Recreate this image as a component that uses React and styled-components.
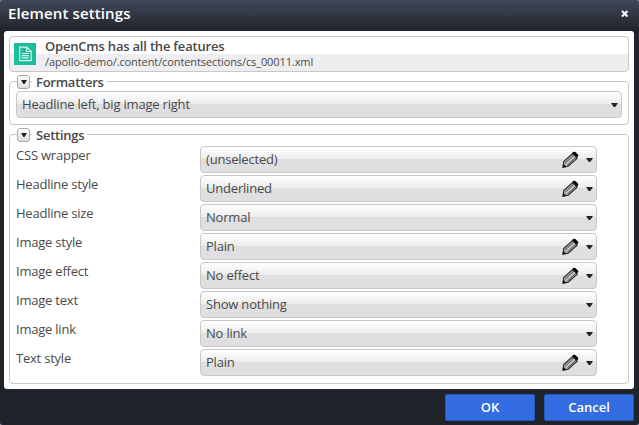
import React from 'react';
import styled, { createGlobalStyle } from 'styled-components';

const GlobalStyle = createGlobalStyle`
  * { box-sizing: border-box; }
  body {
    margin: 0;
    overflow: hidden;
    background: #8d95ad;
    font-family: "Open Sans", sans-serif;
    font-size: 13px;
    color: #4a4a4a;
  }
`;

const Dialog = styled.div`
  display: flex;
  flex-direction: column;
  width: 639px;
  height: 425px;
  padding: 0 5px 0 4px;
  border-radius: 3px;
  background: #1f242b linear-gradient(#424859, #1f242b) no-repeat top / 100% 31px;
`;

const TitleBar = styled.header`
  display: flex;
  justify-content: space-between;
  flex: none;
  height: 31px;
  padding: 0 4px;
  color: #fff;
`;

const Title = styled.h1`
  margin: 0;
  font-size: 15px;
  font-weight: 600;
  letter-spacing: 0.12px;
  line-height: 27px;
`;

const CloseButton = styled.button`
  display: flex;
  width: 10px;
  height: 27px;
  padding: 10px 1px 0;
  border: 0;
  background: none;
`;

const Content = styled.main`
  height: 358px;
  flex: none;
  padding: 5px;
  border-radius: 3px;
  background: #fff;
`;

const ResourceInfo = styled.div`
  display: flex;
  height: 36px;
  padding: 6px 4px;
  gap: 9px;
  border: 1px solid #c8c8c8;
  border-radius: 4px;
  background: linear-gradient(#fff 17px, #eeeef0 17px);
`;

const ResourceText = styled.div`
  margin-top: -6px;
`;

const ResourceTitle = styled.div`
  height: 18px;
  color: #484848;
  font-size: 13px;
  font-weight: 600;
  letter-spacing: -0.2px;
  line-height: 19px;
`;

const ResourcePath = styled.div`
  font-size: 11px;
  letter-spacing: -0.1px;
  line-height: 14px;
`;

const Group = styled.section`
  height: ${(p) => p.$height}px;
  margin-top: 9px;
  padding: 0 6px;
  border: 1px solid #c8c8c8;
  border-radius: 4px;
`;

const GroupHeader = styled.div`
  display: flex;
  width: max-content;
  height: 14px;
  margin: -7px 0 2px 1px;
`;

const Toggle = styled.button`
  display: flex;
  align-items: center;
  justify-content: center;
  width: 13px;
  height: 14px;
  padding: 0;
  border: 1px solid #aaa;
  border-radius: 3px;
  background: linear-gradient(#fff, #ddd);
`;

const GroupTitle = styled.h2`
  margin: 0 0 0 2px;
  padding: 0 3px 0 4px;
  background: #fff;
  color: #484848;
  font-size: 13px;
  font-weight: 600;
  letter-spacing: -0.25px;
  line-height: 15px;
`;

const Row = styled.div`
  display: grid;
  grid-template-columns: 184px 397px;
  height: 29px;
`;

const Label = styled.label`
  letter-spacing: -0.22px;
  line-height: 18px;
`;

const Select = styled.div`
  display: flex;
  align-items: center;
  height: 27px;
  padding: 0 3px 0 5px;
  border: 1px solid #c8c8c8;
  border-radius: 4px;
  background: linear-gradient(#fff 0, #ececec 12px, #dfdfe1 12px);
`;

const Value = styled.span`
  flex: 1;
  letter-spacing: -0.2px;
  line-height: 25px;
`;

const FormatterSlot = styled.div`
  margin-top: 1px;
`;

const SettingsList = styled.div`
  padding-top: 2px;
`;

const PencilSvg = styled.svg`
  margin-right: 7px;
`;

const Footer = styled.footer`
  display: flex;
  justify-content: flex-end;
  gap: 9px;
  padding-top: 5px;
`;

const ActionButton = styled.button`
  width: 90px;
  height: 27px;
  padding: 0 0 1px;
  border: 1px solid #2657bd;
  border-radius: 2px;
  background: #346de2;
  color: #fff;
  font: 600 13px/24px "Open Sans", sans-serif;
`;

const Arrow = ({ width = 7 }) => (
  <svg width={width} height="4" viewBox="0 0 7 4" preserveAspectRatio="none">
    <path d="M0 0h7L4.2 4H2.8z" fill="#222" />
  </svg>
);

const Pencil = () => (
  <PencilSvg width="17" height="17" viewBox="0 0 17 17">
    <path d="M1 16l.7-5.4 8.8-8 4.7 4.6-9 8z" fill="#aaa" stroke="#303030" strokeWidth="1.1" />
    <path d="M3.2 12.1l8.6-8.1M5.3 14.2l8.7-8.1" stroke="#444" strokeWidth=".8" />
    <path d="M4.2 13.2l8.7-8.2" stroke="#d8d8d8" strokeWidth="1" />
    <path d="M.5 16.7l.6-4 3.6 3.2z" fill="#171717" />
    <path d="M10.2 2l1-.9q1-.9 2.1 0l2.6 2.5q.9 1 0 2l-.9 1.2z" fill="#050505" />
  </PencilSvg>
);

const DocumentIcon = () => (
  <svg width="22" height="22" viewBox="0 0 22 22">
    <path fill="#1bbc9b" d="M0 0h22v22H0z" />
    <path d="M5.7 4.2h7.2l4.3 4.2v9.2H5.7zM12.7 4.2v4.3h4.5M7.7 10.5h7.2M7.7 12.6h7.2M7.7 14.8h7.2" fill="none" stroke="#d5f5ed" strokeWidth="1.2" />
  </svg>
);

const settings = [
  ['CSS wrapper', '(unselected)', true],
  ['Headline style', 'Underlined', true],
  ['Headline size', 'Normal', false],
  ['Image style', 'Plain', true],
  ['Image effect', 'No effect', true],
  ['Image text', 'Show nothing', false],
  ['Image link', 'No link', false],
  ['Text style', 'Plain', true],
];

const SelectField = ({ value, editable }) => (
  <Select>
    <Value>{value}</Value>
    {editable && <Pencil />}
    <Arrow />
  </Select>
);

const FieldGroup = ({ title, height, children }) => (
  <Group $height={height}>
    <GroupHeader>
      <Toggle aria-label={`Toggle ${title}`}><Arrow width={6} /></Toggle>
      <GroupTitle>{title}</GroupTitle>
    </GroupHeader>
    {children}
  </Group>
);

export default function App() {
  return (
    <>
      <GlobalStyle />
      <Dialog>
        <TitleBar>
          <Title>Element settings</Title>
          <CloseButton aria-label="Close">
            <svg width="8" height="8" viewBox="0 0 8 8">
              <path d="M1 1l5.5 5.5M6.5 1L1 6.5" stroke="#fff" strokeWidth="2" />
            </svg>
          </CloseButton>
        </TitleBar>
        <Content>
          <ResourceInfo>
            <DocumentIcon />
            <ResourceText>
              <ResourceTitle>OpenCms has all the features</ResourceTitle>
              <ResourcePath>/apollo-demo/.content/contentsections/cs_00011.xml</ResourcePath>
            </ResourceText>
          </ResourceInfo>
          <FieldGroup title="Formatters" height={44}>
            <FormatterSlot>
              <SelectField value="Headline left, big image right" />
            </FormatterSlot>
          </FieldGroup>
          <FieldGroup title="Settings" height={250}>
            <SettingsList>
              {settings.map(([label, value, editable]) => (
                <Row key={label}>
                  <Label>{label}</Label>
                  <SelectField value={value} editable={editable} />
                </Row>
              ))}
            </SettingsList>
          </FieldGroup>
        </Content>
        <Footer>
          <ActionButton>OK</ActionButton>
          <ActionButton>Cancel</ActionButton>
        </Footer>
      </Dialog>
    </>
  );
}
